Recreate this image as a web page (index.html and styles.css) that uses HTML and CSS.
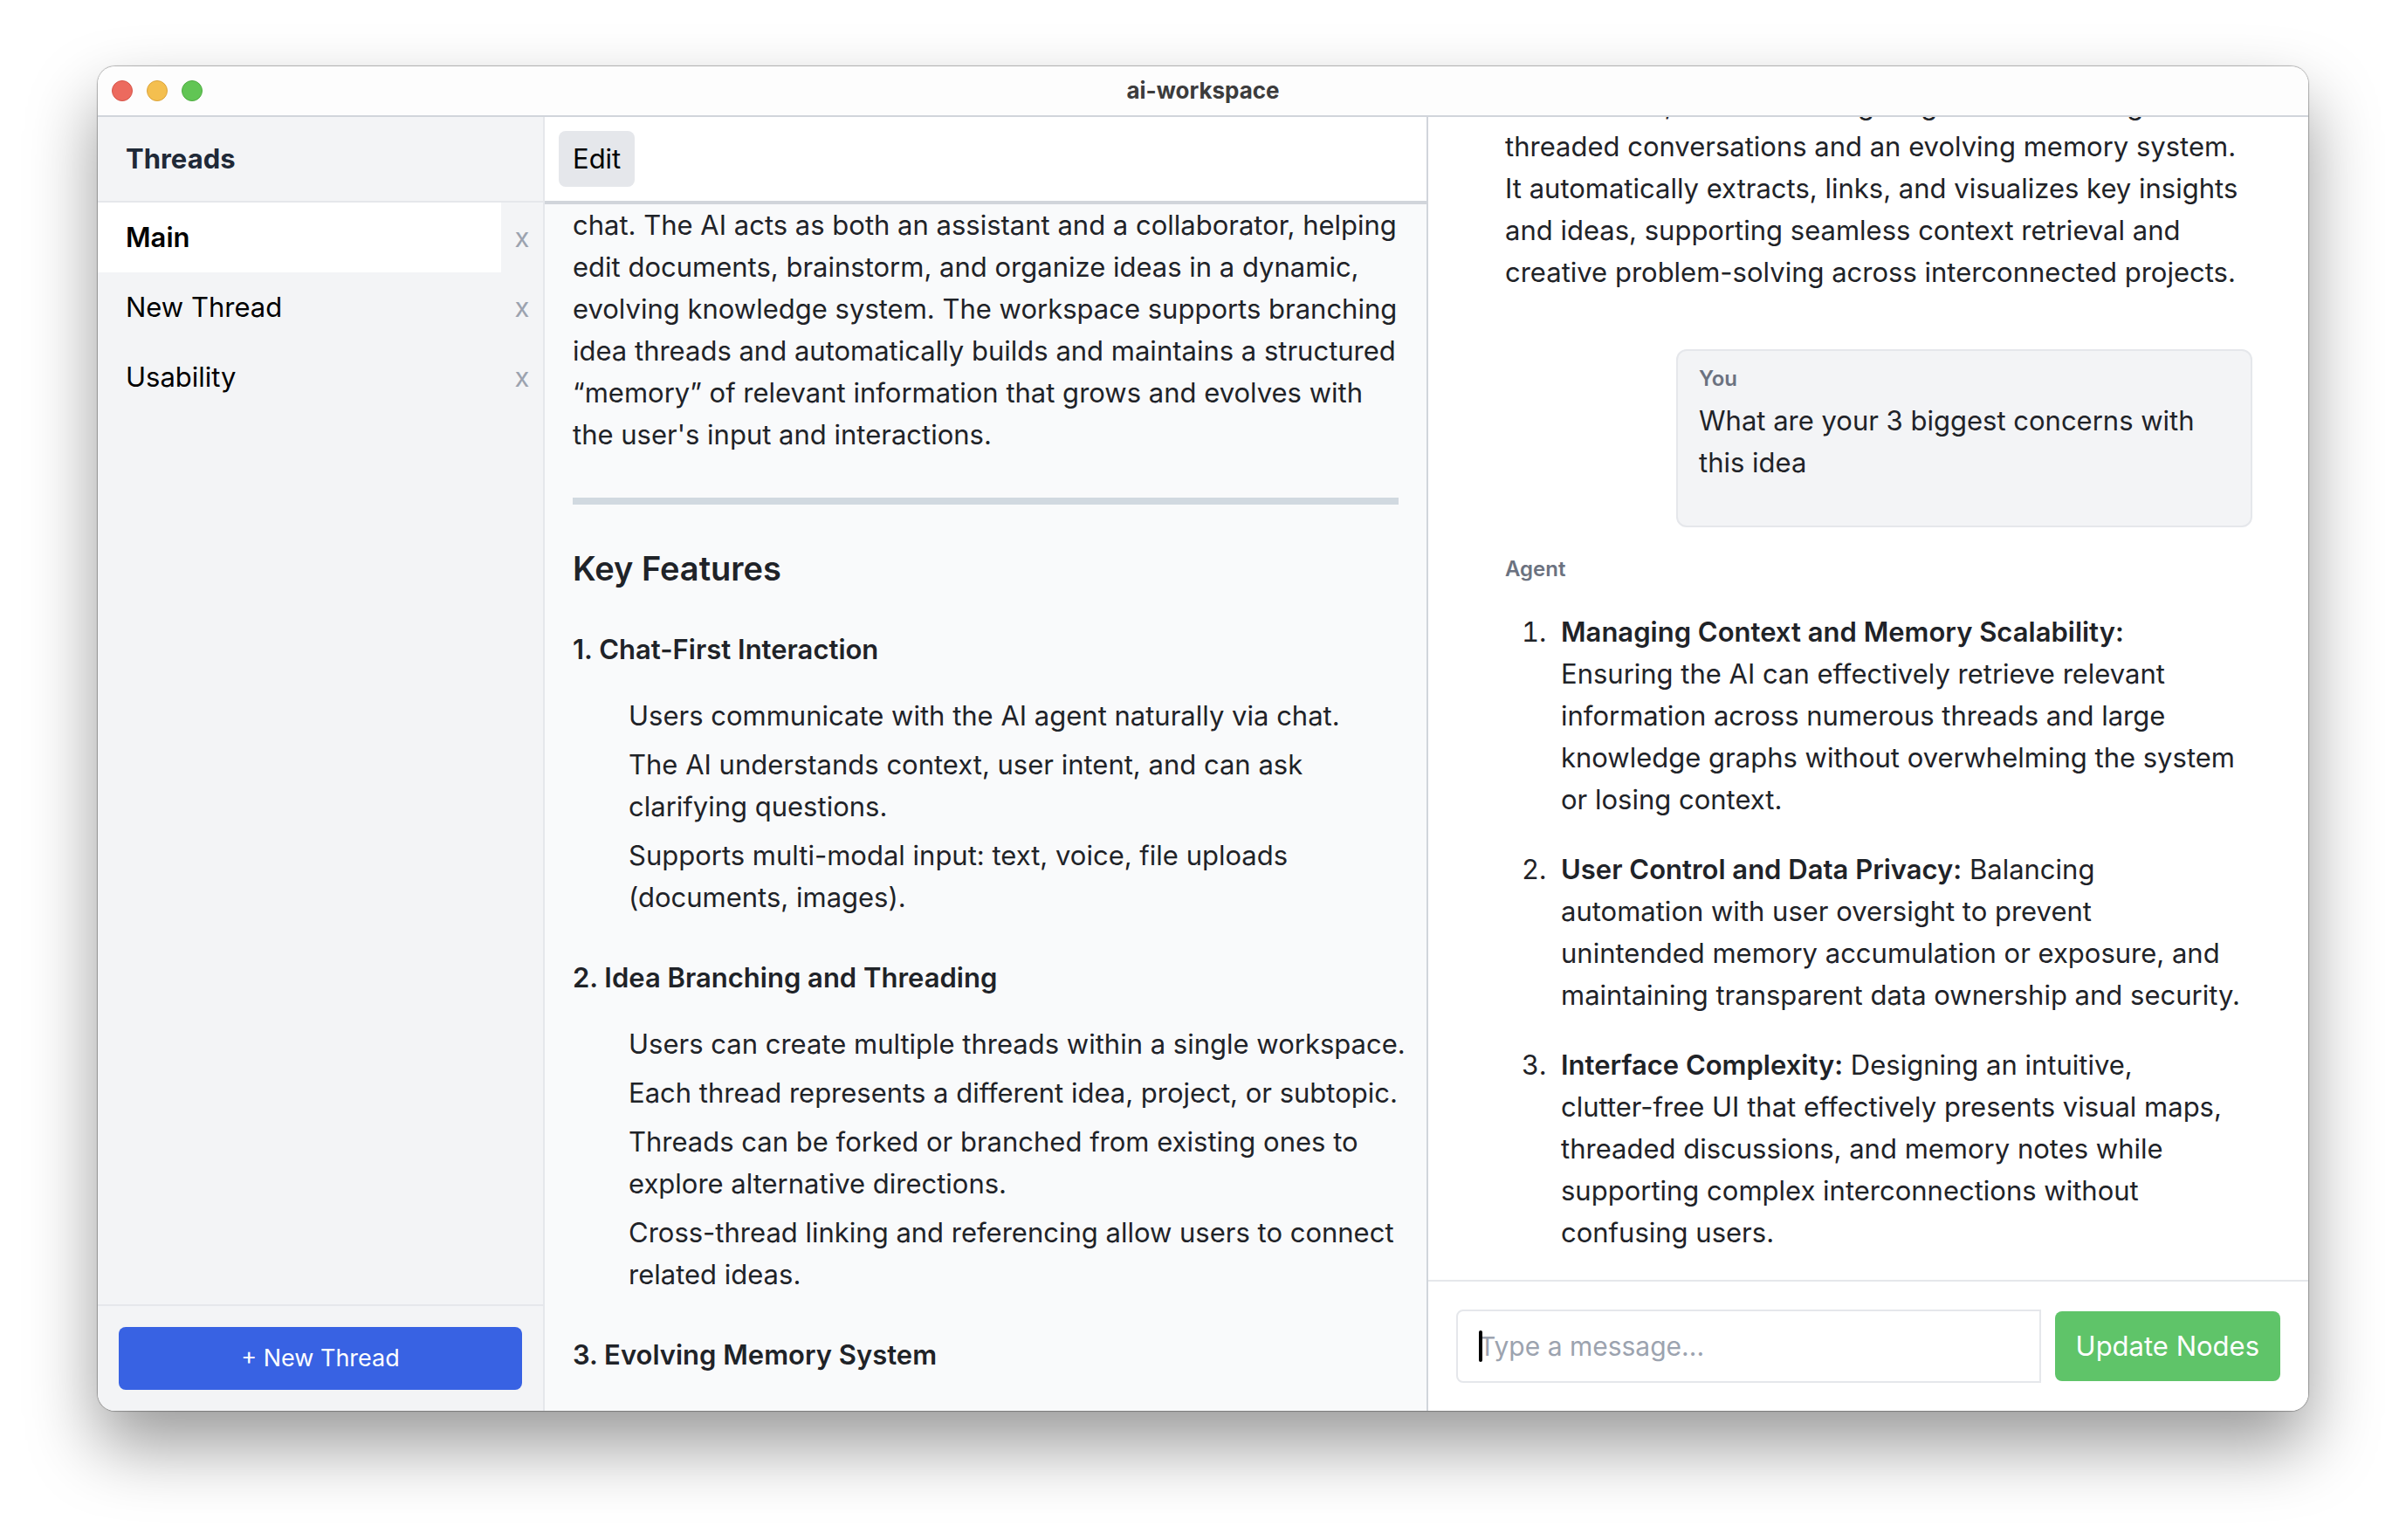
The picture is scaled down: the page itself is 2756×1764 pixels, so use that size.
FILE: index.html
```html
<!DOCTYPE html>
<html lang="en">
<head>
<meta charset="utf-8">
<meta name="viewport" content="width=device-width, initial-scale=1">
<title>ai-workspace</title>
<link rel="stylesheet" href="styles.css">
</head>
<body>
<div class="window">
  <header class="titlebar">
    <svg class="lights" viewBox="0 0 104 24" aria-hidden="true">
      <circle cx="12" cy="12" r="11.5" fill="#ec6a5e" stroke="#d65549"/>
      <circle cx="52" cy="12" r="11.5" fill="#f4bf4f" stroke="#dba43c"/>
      <circle cx="92" cy="12" r="11.5" fill="#61c554" stroke="#4fac42"/>
    </svg>
    <h1 class="title">ai-workspace</h1>
  </header>
  <div class="app">
    <aside class="sidebar">
      <h2 class="sidebar-title">Threads</h2>
      <ul class="threads">
        <li class="thread"><button class="thread-name active" type="button">Main</button><button class="thread-close" type="button" aria-label="Delete Main">x</button></li>
        <li class="thread"><button class="thread-name" type="button">New Thread</button><button class="thread-close" type="button" aria-label="Delete New Thread">x</button></li>
        <li class="thread"><button class="thread-name" type="button">Usability</button><button class="thread-close" type="button" aria-label="Delete Usability">x</button></li>
      </ul>
      <div class="sidebar-footer"><button class="new-thread" type="button">+ New Thread</button></div>
    </aside>

    <main class="editor">
      <div class="toolbar"><button class="edit" type="button">Edit</button></div>
      <article class="document markdown">
        <p>chat. The AI acts as both an assistant and a collaborator, helping edit documents, brainstorm, and organize ideas in a dynamic, evolving knowledge system. The workspace supports branching idea threads and automatically builds and maintains a structured “memory” of relevant information that grows and evolves with the user's input and interactions.</p>
        <hr>
        <h3>Key Features</h3>
        <h4>1. Chat-First Interaction</h4>
        <ul>
          <li>Users communicate with the AI agent naturally via chat.</li>
          <li>The AI understands context, user intent, and can ask clarifying questions.</li>
          <li>Supports multi-modal input: text, voice, file uploads (documents, images).</li>
        </ul>
        <h4>2. Idea Branching and Threading</h4>
        <ul>
          <li>Users can create multiple threads within a single workspace.</li>
          <li>Each thread represents a different idea, project, or subtopic.</li>
          <li>Threads can be forked or branched from existing ones to explore alternative directions.</li>
          <li>Cross-thread linking and referencing allow users to connect related ideas.</li>
        </ul>
        <h4>3. Evolving Memory System</h4>
      </article>
    </main>

    <section class="chat">
      <div class="messages">
        <div class="message agent markdown">
          <p>and creation, assists in navigating and connecting threaded conversations and an evolving memory system. It automatically extracts, links, and visualizes key insights and ideas, supporting seamless context retrieval and creative problem-solving across interconnected projects.</p>
        </div>
        <div class="message user markdown">
          <div class="author">You</div>
          <p>What are your 3 biggest concerns with this idea</p>
        </div>
        <div class="message agent markdown">
          <div class="author">Agent</div>
          <ol>
            <li><p><strong>Managing Context and Memory Scalability:</strong> Ensuring the AI can effectively retrieve relevant information across numerous threads and large knowledge graphs without overwhelming the system or losing context.</p></li>
            <li><p><strong>User Control and Data Privacy:</strong> Balancing automation with user oversight to prevent unintended memory accumulation or exposure, and maintaining transparent data ownership and security.</p></li>
            <li><p><strong>Interface Complexity:</strong> Designing an intuitive, <span class="nowrap">clutter-free</span> UI that effectively presents visual maps, threaded discussions, and memory notes while supporting complex interconnections without confusing users.</p></li>
          </ol>
        </div>
      </div>
      <form class="composer">
        <div class="field">
          <input class="input" type="text" placeholder="Type a message..." aria-label="Message">
          <span class="caret"></span>
        </div>
        <button class="update" type="button">Update Nodes</button>
      </form>
    </section>
  </div>
</div>
</body>
</html>
```
FILE: styles.css
```css
* {
  box-sizing: border-box;
  margin: 0;
  padding: 0;
}

body {
  display: flex;
  height: 100vh;
  padding: 76px 112px 148px;
  background: #fff;
  color: #000;
  font-family: Inter, "Liberation Sans", sans-serif;
  font-size: 31px;
  line-height: 48px;
}

button,
input {
  border: 0;
  background: none;
  color: inherit;
  font: inherit;
}

.window {
  display: flex;
  flex: 1;
  flex-direction: column;
  min-width: 0;
  overflow: hidden;
  border-radius: 20px;
  background: #fff;
  box-shadow: 0 0 1px 1px rgba(0, 0, 0, 0.28), 0 40px 80px rgba(0, 0, 0, 0.4);
}

/* Title bar */
.titlebar {
  display: grid;
  grid-template-columns: 1fr auto 1fr;
  align-items: center;
  height: 58px;
  padding: 0 16px;
  border-bottom: 2px solid #d1d5db;
  background: #fdfdfd;
}

.lights {
  width: 104px;
  height: 24px;
}

.title {
  color: #3c3c3c;
  font-size: 26px;
  font-weight: 700;
  line-height: 32px;
}

.app {
  display: grid;
  flex: 1;
  grid-template-columns: 512px minmax(0, 1fr) minmax(0, 1fr);
  min-height: 0;
}

/* Threads */
.sidebar {
  display: flex;
  flex-direction: column;
  border-right: 2px solid #e5e7eb;
  background: #f3f4f6;
}

.sidebar-title {
  padding: 24px 32px;
  border-bottom: 2px solid #e5e7eb;
  color: #1f2937;
  font-size: 31px;
  font-weight: 700;
}

.threads {
  flex: 1;
  list-style: none;
}

.thread {
  display: flex;
}

.thread-name {
  flex: 1;
  padding: 16px 32px;
  text-align: left;
}

.thread-name.active {
  background: #fff;
  font-weight: 600;
}

.thread-close {
  width: 48px;
  color: #9ca3af;
}

.sidebar-footer {
  padding: 24px;
  border-top: 2px solid #e5e7eb;
}

.new-thread {
  width: 100%;
  padding: 16px;
  border-radius: 8px;
  background: #3862e3;
  color: #fff;
  font-size: 27px;
  line-height: 40px;
}

/* Document */
.editor {
  display: flex;
  flex-direction: column;
  min-height: 0;
  background: #f9fafb;
}

.toolbar {
  padding: 16px;
  border-bottom: 4px solid #d1d5db;
  background: #fff;
}

.edit {
  padding: 8px 16px;
  border-radius: 8px;
  background: #e5e7eb;
}

.document {
  flex: 1;
  min-height: 0;
  padding: 0 32px;
  overflow: hidden;
}

.markdown {
  color: #1f2328;
}

.document p,
.document ul {
  margin-right: -8px;
  margin-bottom: 32px;
}

.document hr {
  height: 8px;
  margin: 48px 0;
  border: 0;
  background: #d1d9e0;
}

.document h3 {
  margin: 48px 0 32px;
  font-size: 38px;
  font-weight: 600;
  line-height: 50px;
}

.document h4 {
  margin: 48px 0 32px;
  font-size: 31px;
  font-weight: 600;
  line-height: 40px;
}

.document ul {
  padding-left: 64px;
  list-style: none;
}

.document li + li {
  margin-top: 8px;
}

/* Chat */
.chat {
  display: flex;
  flex-direction: column;
  min-height: 0;
  border-left: 2px solid #d1d5db;
  background: #fff;
}

.messages {
  display: flex;
  flex: 1;
  flex-direction: column;
  justify-content: flex-end;
  gap: 16px;
  min-height: 0;
  padding: 0 64px 30px;
  overflow: hidden;
}

.message {
  flex-shrink: 0;
}

.message p {
  margin-bottom: 32px;
}

.agent {
  padding: 16px 12px 16px 24px;
}

.agent:last-child {
  padding-bottom: 0;
}

.user {
  align-self: flex-end;
  width: 75%;
  padding: 16px 24px;
  border: 2px solid #e5e7eb;
  border-radius: 12px;
  background: #f3f4f6;
}

.author {
  margin-bottom: 8px;
  color: #6b7280;
  font-size: 24px;
  font-weight: 600;
  line-height: 32px;
}

.message ol {
  margin-top: 32px;
  padding-left: 64px;
}

.message li::marker {
  content: counter(list-item) ".\00a0\00a0";
}

.message li + li {
  margin-top: 32px;
}

.message li p {
  margin: 0;
}

.message strong {
  font-weight: 600;
}

.nowrap {
  white-space: nowrap;
}

.composer {
  display: flex;
  align-items: center;
  gap: 16px;
  padding: 32px;
  border-top: 2px solid #e5e7eb;
}

.field {
  position: relative;
  flex: 1;
}

.input {
  display: block;
  width: 100%;
  height: 84px;
  padding: 16px 24px;
  border: 2px solid #e5e7eb;
  border-radius: 8px 0 0 8px;
  outline: 0;
  font-size: 30px;
}

.input::placeholder {
  color: #9ca3af;
}

.caret {
  position: absolute;
  top: 24px;
  left: 26px;
  width: 4px;
  height: 36px;
  border-radius: 2px;
  background: #000;
}

.update {
  padding: 16px 24px;
  border-radius: 8px;
  background: #5fc469;
  color: #fff;
}
```
